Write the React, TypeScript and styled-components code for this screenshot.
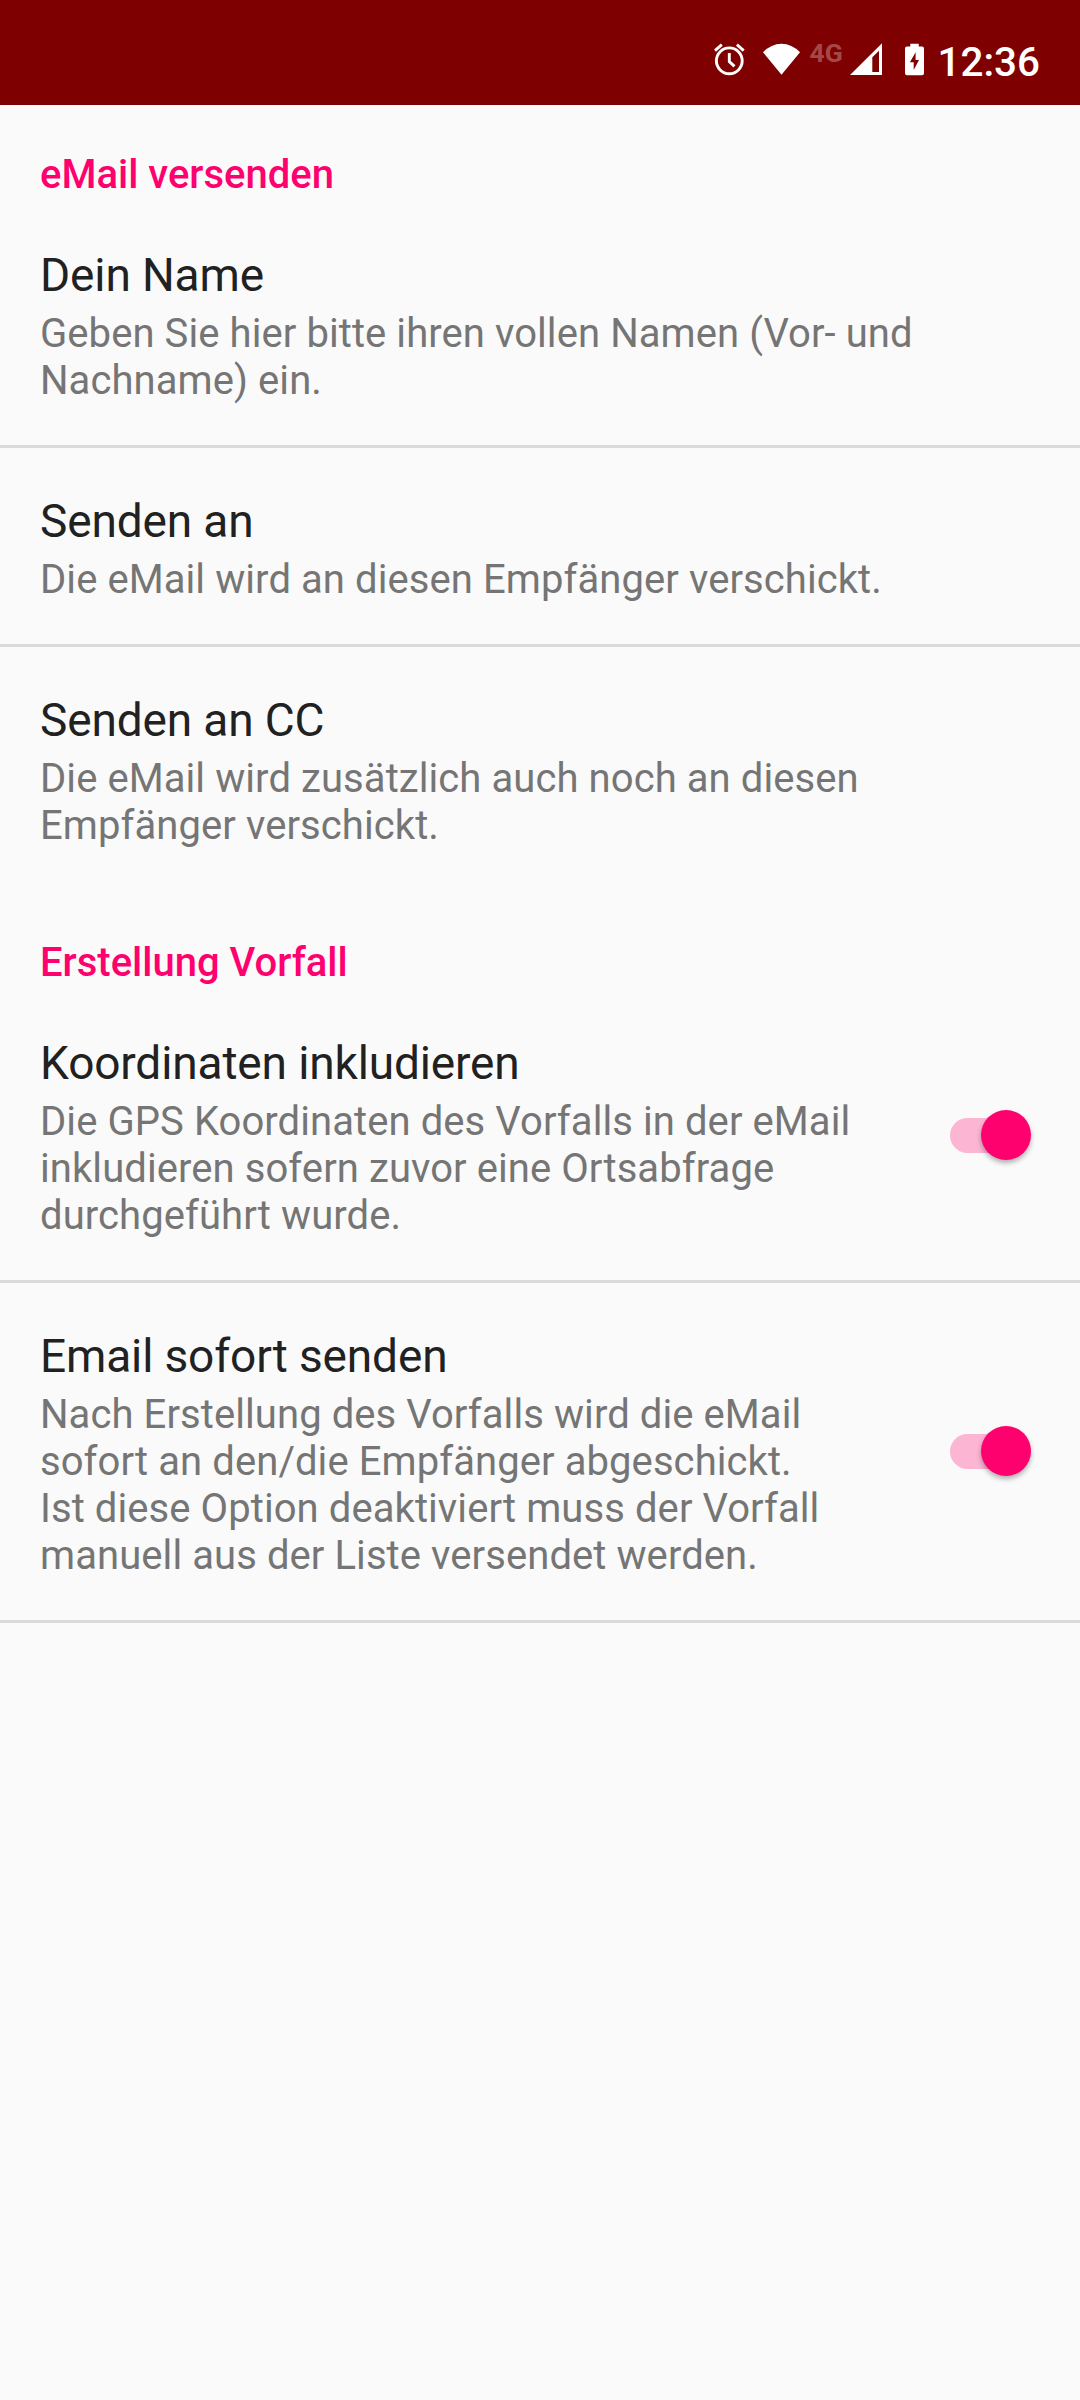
import React from "react";
import styled, { createGlobalStyle } from "styled-components";

const Global = createGlobalStyle`
  * { box-sizing: border-box; }
  body { margin: 0; background: #fafafa; font-family: Roboto, sans-serif; }
`;
const Screen = styled.div`width: 1080px; min-height: 2400px; background: #fafafa;`;
const StatusBar = styled.header`
  height: 105px; background: #7f0000; color: #fff; display: flex; justify-content: flex-end;
  padding: 38px 40px 0 0;
`;
const Glyph = styled.svg<{ $width: number; $gap: number }>`
  width: ${p => p.$width}px; height: 34px; margin: 5px ${p => p.$gap}px 0 0; flex: none; display: block;
`;
const Network = styled.span`
  width: 40px; font-size: 26.5px; line-height: 30px; font-weight: 700; color: rgba(255,255,255,.3);
`;
const Clock = styled.time`font-size: 40.4px; line-height: 48px; font-weight: 500; padding-top: 1px;`;
const Category = styled.h2`
  margin: 0; padding: 46px 40px 0; font-size: 40px; line-height: 47px; font-weight: 500; color: #ff006f;
`;
const CategoryBody = styled.div`padding-top: 4px;`;
const Preference = styled.section<{ $height: number; $line?: boolean }>`
  height: ${p => p.$height}px; padding: 46px 40px 0; display: flex;
  border-bottom: ${p => (p.$line ? "3px solid #dadada" : "0")};
`;
const Copy = styled.div`flex: 1; white-space: pre;`;
const Title = styled.h3`
  margin: 0; font-size: 46px; line-height: 54px; font-weight: 400; letter-spacing: -.13px; color: #212121;
`;
const Summary = styled.p`
  margin: 8px 0 0; font-size: 40px; line-height: 47px; letter-spacing: .08px; color: #757575;
`;
const Toggle = styled.button<{ $offset: number }>`
  width: 90px; height: 56px; margin-top: ${p => p.$offset}px; padding: 0; border: 0; background: none;
  display: flex; align-items: center; flex: none;
`;
const Track = styled.span`
  width: 76px; height: 35px; border-radius: 18px; background: #fcb5d3; display: flex; align-items: center; justify-content: flex-end;
`;
const Thumb = styled.span`
  width: 50px; height: 50px; flex: none; border-radius: 50%; background: #ff006f; margin-right: -5px;
  box-shadow: 0 3px 5px rgba(0,0,0,.3);
`;
const Switch = ({ offset, label }: { offset: number; label: string }) => (
  <Toggle $offset={offset} role="switch" aria-checked="true" aria-label={label}><Track><Thumb /></Track></Toggle>
);

const AlarmIcon = () => (
  <Glyph $width={32} $gap={18} viewBox="0 0 32 34" fill="none" stroke="#fff" strokeWidth="2.9">
    <circle cx="16.3" cy="17.8" r="12.9" />
    <path d="M16.3 10v8.5l5.2 4.9M2 7.6 8.8 1.7M23.9 1.7l6.8 5.9" />
  </Glyph>
);
const WifiIcon = () => (
  <Glyph $width={38} $gap={9} viewBox="0 0 38 34" fill="#fff">
    <path d="M0 9.2Q8.3.7 18.5.7T37 9.2L18.5 31.7Z" />
  </Glyph>
);
const SignalIcon = () => (
  <Glyph $width={32} $gap={23} viewBox="0 0 32 34" fill="#fff" fillRule="evenodd">
    <path d="M0 32 32 .3V32ZM22.3 14.3V28.9H29V7.7Z" />
  </Glyph>
);
const BatteryIcon = () => (
  <Glyph $width={19} $gap={14} viewBox="0 0 19 34" fill="#fff" fillRule="evenodd">
    <path d="M5.3 3.4V.8H13.7V3.4H17Q19 3.4 19 5.4V30.2Q19 32.2 17 32.2H2Q0 32.2 0 30.2V5.4Q0 3.4 2 3.4ZM10.6 9.2 4.9 19.3H8.7V27L14 16.9H10.6Z" />
  </Glyph>
);

export default function App() {
  return (
    <Screen>
      <Global />
      <StatusBar>
        <AlarmIcon /><WifiIcon /><Network>4G</Network><SignalIcon /><BatteryIcon /><Clock>12:36</Clock>
      </StatusBar>
      <Category>eMail versenden</Category>
      <CategoryBody>
        <Preference $height={246} $line>
          <Copy><Title>Dein Name</Title><Summary>{"Geben Sie hier bitte ihren vollen Namen (Vor- und\nNachname) ein."}</Summary></Copy>
        </Preference>
        <Preference $height={199} $line>
          <Copy><Title>Senden an</Title><Summary>Die eMail wird an diesen Empfänger verschickt.</Summary></Copy>
        </Preference>
        <Preference $height={246}>
          <Copy><Title>Senden an CC</Title><Summary>{"Die eMail wird zusätzlich auch noch an diesen\nEmpfänger verschickt."}</Summary></Copy>
        </Preference>
      </CategoryBody>
      <Category>Erstellung Vorfall</Category>
      <CategoryBody>
        <Preference $height={293} $line>
          <Copy><Title>Koordinaten inkludieren</Title><Summary>{"Die GPS Koordinaten des Vorfalls in der eMail\ninkludieren sofern zuvor eine Ortsabfrage\ndurchgeführt wurde."}</Summary></Copy>
          <Switch offset={71} label="Koordinaten inkludieren" />
        </Preference>
        <Preference $height={340} $line>
          <Copy><Title>Email sofort senden</Title><Summary>{"Nach Erstellung des Vorfalls wird die eMail\nsofort an den/die Empfänger abgeschickt.\nIst diese Option deaktiviert muss der Vorfall\nmanuell aus der Liste versendet werden."}</Summary></Copy>
          <Switch offset={94} label="Email sofort senden" />
        </Preference>
      </CategoryBody>
    </Screen>
  );
}
